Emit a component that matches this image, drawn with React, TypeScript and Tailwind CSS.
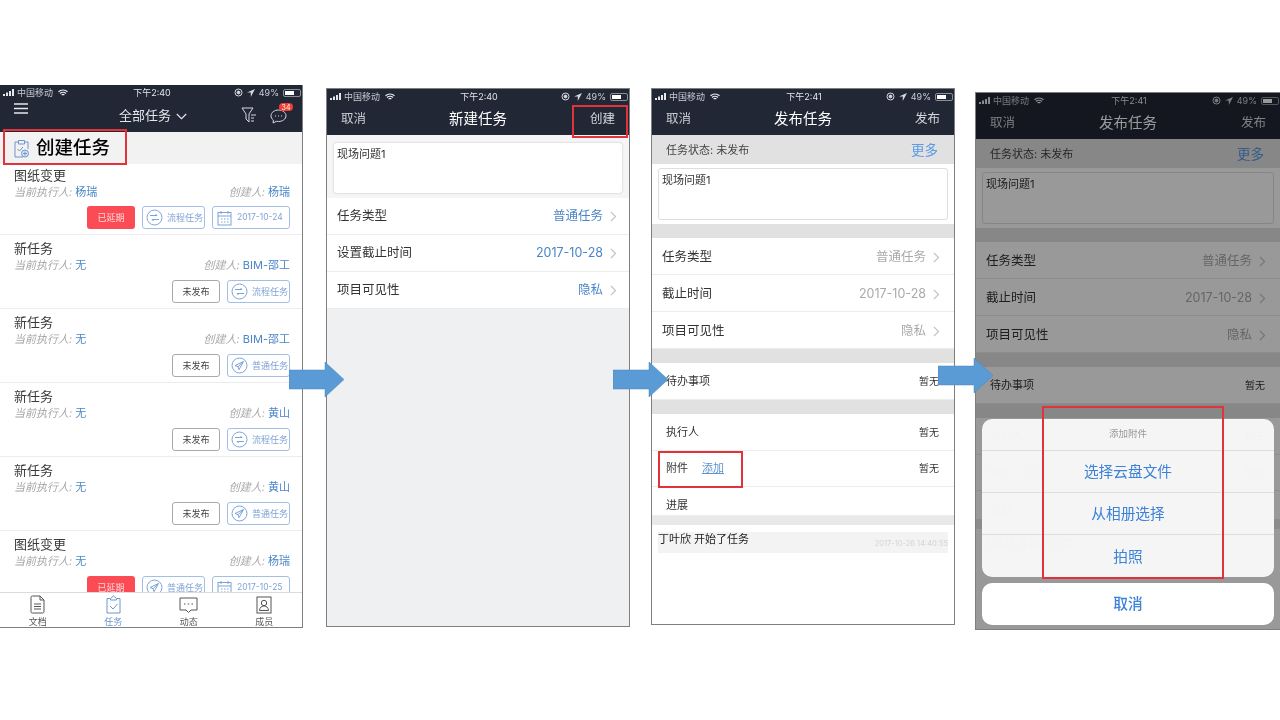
import type { ReactNode } from "react";

const BLUE = "#4a86c8";

function Chevron({ color = "#c4c4c8" }: { color?: string }) {
  return (
    <svg width="7" height="11" viewBox="0 0 7 11" fill="none" stroke={color} strokeWidth="1.2">
      <path d="M1 1l4.5 4.5L1 10" />
    </svg>
  );
}

function StatusBar({ time }: { time: string }) {
  return (
    <div className="flex h-[15px] items-center justify-between pl-[3px] pr-[1px] text-[9px] leading-none text-[#c9cbd2]">
      <div className="flex w-[100px] items-center gap-[2px]">
        <svg width="12" height="7" viewBox="0 0 12 7" fill="#e8e8ea">
          <rect x="0" y="5" width="2" height="2" />
          <rect x="3" y="3.5" width="2" height="3.5" />
          <rect x="6" y="2" width="2" height="5" />
          <rect x="9" y="0" width="2" height="7" />
        </svg>
        <span>中国移动</span>
        <svg className="ml-[3px]" width="10" height="8" viewBox="0 0 10 8" fill="none" stroke="#e8e8ea" strokeWidth="1.2">
          <path d="M.5 2.8a6.5 6.5 0 0 1 9 0M2 4.5a4.3 4.3 0 0 1 6 0M3.6 6a2 2 0 0 1 2.8 0" />
        </svg>
      </div>
      <span className="text-[#e4e5e8]">{time}</span>
      <div className="flex w-[100px] items-center justify-end gap-[4px]">
        <svg width="9" height="9" viewBox="0 0 9 9" fill="none" stroke="#d8d8dc">
          <circle cx="4.5" cy="4.5" r="3.5" />
          <circle cx="4.5" cy="4.5" r="1.4" fill="#d8d8dc" />
        </svg>
        <svg width="8" height="8" viewBox="0 0 8 8" fill="#d8d8dc">
          <path d="M8 0L0 3.6h3.8V8z" />
        </svg>
        <span>49%</span>
        <span className="flex h-[8px] w-[18px] items-stretch rounded-[2px] border border-[#8d8f98] p-[1px]">
          <span className="w-[9px] bg-white" />
        </span>
      </div>
    </div>
  );
}

function NavBar({ left, title, right }: { left: string; title: string; right: string }) {
  return (
    <div className="flex h-[31px] items-center justify-between pb-[2px] pl-[14px] pr-[14px]">
      <span className="mt-[2px] text-[12.5px] text-[#c8cad0]">{left}</span>
      <span className="text-[14.5px] text-white">{title}</span>
      <span className="mt-[2px] text-[12.5px] text-[#d6d7dc]">{right}</span>
    </div>
  );
}

function FlowIcon() {
  return (
    <svg width="17" height="17" viewBox="0 0 17 17" fill="none" stroke="#7fa3d8" strokeWidth="1">
      <circle cx="8.5" cy="8.5" r="7.5" />
      <path d="M4 6.5h7l-1.5-1.5M13 10.5H6l1.5 1.5" />
    </svg>
  );
}

function PlaneIcon() {
  return (
    <svg width="17" height="17" viewBox="0 0 17 17" fill="none" stroke="#7fa3d8" strokeWidth="1">
      <circle cx="8.5" cy="8.5" r="7.5" />
      <path d="M12.5 4.5L4 8.5l3 1.2 1 3zM7 9.7l5.5-5.2" />
    </svg>
  );
}

function CalendarIcon() {
  return (
    <svg width="15" height="16" viewBox="0 0 15 16" fill="none" stroke="#7fa3d8" strokeWidth="1">
      <rect x="1" y="2.5" width="13" height="12.5" />
      <path d="M1 6h13M4 1v3M11 1v3M4 9h1.5M7 9h1.5M10 9h1.5M4 12h1.5M7 12h1.5M10 12h1.5" />
    </svg>
  );
}

function RedTag() {
  return (
    <div className="flex h-[23px] w-[48px] items-center justify-center rounded-[3px] bg-[#fb4b54] text-[9px] text-[#ffd9dc]">
      已延期
    </div>
  );
}

function DraftTag() {
  return (
    <div className="flex h-[23px] w-[48px] items-center justify-center rounded-[3px] border border-[#a9a9a9] text-[9px] text-[#444]">
      未发布
    </div>
  );
}

function TypeTag({ kind }: { kind: "flow" | "plain" }) {
  return (
    <div className="flex h-[23px] w-[63px] items-center gap-[4px] rounded-[3px] border border-[#a4bfe6] pl-[3px] text-[9px] text-[#7fa3d8]">
      {kind === "flow" ? <FlowIcon /> : <PlaneIcon />}
      <span className="whitespace-nowrap">{kind === "flow" ? "流程任务" : "普通任务"}</span>
    </div>
  );
}

function DateTag({ date }: { date: string }) {
  return (
    <div className="flex h-[23px] w-[78px] items-center gap-[5px] rounded-[3px] border border-[#a4bfe6] pl-[4px] text-[8.5px] text-[#7fa3d8]">
      <CalendarIcon />
      <span className="whitespace-nowrap">{date}</span>
    </div>
  );
}

type Task = { title: string; owner: string; creator: string; kind: "flow" | "plain"; date?: string };

const tasks: Task[] = [
  { title: "图纸变更", owner: "杨瑞", creator: "杨瑞", kind: "flow", date: "2017-10-24" },
  { title: "新任务", owner: "无", creator: "BIM-邵工", kind: "flow" },
  { title: "新任务", owner: "无", creator: "BIM-邵工", kind: "plain" },
  { title: "新任务", owner: "无", creator: "黄山", kind: "flow" },
  { title: "新任务", owner: "无", creator: "黄山", kind: "plain" },
  { title: "图纸变更", owner: "无", creator: "杨瑞", kind: "plain", date: "2017-10-25" },
];

function TaskCard({ task, first }: { task: Task; first: boolean }) {
  return (
    <div className={first ? "h-[71px] shrink-0 border-b border-[#ececec] pl-[14px] pr-[12px] pt-[3px]" : "h-[74px] shrink-0 border-b border-[#ececec] pl-[14px] pr-[12px] pt-[5px]"}>
      <div className="h-[17px] text-[13px] leading-[17px] text-[#3a3a3a]">{task.title}</div>
      <div className="flex h-[17px] items-center justify-between text-[11px]">
        <span>
          <em className="text-[#a8a8a8]">当前执行人: </em>
          <span className="text-[#4a86c8]">{task.owner}</span>
        </span>
        <span>
          <em className="text-[#a8a8a8]">创建人: </em>
          <span className="text-[#4a86c8]">{task.creator}</span>
        </span>
      </div>
      <div className={first ? "mt-[5px] flex justify-end gap-[7px]" : "mt-[6px] flex justify-end gap-[7px]"}>
        {task.date ? <RedTag /> : <DraftTag />}
        <TypeTag kind={task.kind} />
        {task.date && <DateTag date={task.date} />}
      </div>
    </div>
  );
}

function TabItem({ label, active, icon }: { label: string; active?: boolean; icon: ReactNode }) {
  return (
    <div className={active ? "flex w-[76px] flex-col items-center text-[#6f94cf]" : "flex w-[76px] flex-col items-center text-[#555]"}>
      <div className="flex h-[23px] items-end">{icon}</div>
      <span className="mt-[3px] text-[9px] leading-[10px]">{label}</span>
    </div>
  );
}

function TaskListScreen() {
  return (
    <div className="relative mt-[85px] flex h-[543px] w-[303px] shrink-0 flex-col border border-l-0 border-t-0 border-[#7f7f7f]">
      <div className="h-[47px] bg-[#222736]">
        <StatusBar time="下午2:40" />
        <div className="relative flex h-[32px] items-center justify-center pb-[2px]">
          <svg className="absolute left-[14px] top-[3px]" width="14" height="11" viewBox="0 0 14 11" stroke="#e8e8ea" strokeWidth="1.4">
            <path d="M0 1h14M0 5.5h14M0 10h14" />
          </svg>
          <span className="ml-[4px] mt-[2px] flex items-center gap-[5px] text-[13px] text-[#e4e5e9]">
            全部任务
            <svg width="11" height="7" viewBox="0 0 11 7" fill="none" stroke="#e4e5e9" strokeWidth="1.2">
              <path d="M.8 1l4.7 4.7L10.2 1" />
            </svg>
          </span>
          <svg className="absolute left-[241px] top-[7px]" width="16" height="16" viewBox="0 0 16 16" fill="none" stroke="#d8d9de" strokeWidth="1">
            <path d="M1 1h11L8 7v8L5 12V7zM10 8h5M10 11h3M10 14h3" />
          </svg>
          <svg className="absolute left-[270px] top-[8px]" width="17" height="16" viewBox="0 0 17 16" fill="none" stroke="#d8d9de" strokeWidth="1">
            <path d="M8.5 2C4.4 2 1 4.5 1 7.8c0 1.7.9 3.2 2.4 4.3L3 15l3.4-1.7c.7.1 1.4.2 2.1.2 4.1 0 7.500-2.500 7.500-5.700S12.600 2 8.500 2z" />
            <path d="M5 8h1M8 8h1M11 8h1" />
          </svg>
          <span className="absolute left-[279px] top-[3px] flex h-[8px] w-[14px] items-center justify-center rounded-full bg-[#f23b3b] text-[7px] leading-none text-[#ffd]">
            34
          </span>
        </div>
      </div>
      <div className="flex h-[32px] items-center gap-[7px] bg-[#f2f2f2] pl-[14px] text-[18.5px] font-medium text-black">
        <svg width="15" height="19" viewBox="0 0 15 19" fill="none" stroke="#6f94cf" strokeWidth="1">
          <path d="M4 3H1v15h8M11 3h3v7M4.500 1.500h6V5h-6zM3.500 10l2 2 3.500-4" />
          <circle cx="11" cy="14.500" r="3.500" fill="#dce7f7" />
          <path d="M11 12.500v4M9 14.500h4" />
        </svg>
        <span>创建任务</span>
      </div>
      <div className="flex h-[428px] flex-col overflow-hidden">
        {tasks.map((t, i) => (
          <TaskCard key={i} task={t} first={i === 0} />
        ))}
      </div>
      <div className="flex h-[35px] flex-1 border-t border-[#dcdcdc] bg-white">
        <TabItem
          label="文档"
          icon={
            <svg width="15" height="19" viewBox="0 0 15 19" fill="none" stroke="#555" strokeWidth="1">
              <path d="M1 2.500A1.500 1.500 0 0 1 2.500 1H10l4 4v11.500a1.500 1.500 0 0 1-1.500 1.500h-10A1.500 1.500 0 0 1 1 16.500zM10 1v4h4M4 9h7M4 11.500h7M4 14h7" />
            </svg>
          }
        />
        <TabItem
          active
          label="任务"
          icon={
            <svg width="15" height="19" viewBox="0 0 15 19" fill="none" stroke="#6f94cf" strokeWidth="1">
              <path d="M4 3.500H1V18h13V3.500h-3M4.500 3.500L7.500 1l3 2.500v1.500h-6zM4 11l3 3 4.500-5" />
            </svg>
          }
        />
        <TabItem
          label="动态"
          icon={
            <svg width="19" height="17" viewBox="0 0 19 17" fill="none" stroke="#555" strokeWidth="1">
              <path d="M1 1h17v12h-6l-2.500 2.500L7 13H1zM5 7h1.500M8.700 7h1.500M12.500 7H14" />
            </svg>
          }
        />
        <TabItem
          label="成员"
          icon={
            <svg width="16" height="18" viewBox="0 0 16 18" fill="none" stroke="#555" strokeWidth="1">
              <rect x="1" y="1" width="14" height="16" />
              <circle cx="8" cy="7" r="2.700" />
              <path d="M3.500 14.500c.3-3 2-4.500 4.500-4.500s4.200 1.500 4.500 4.500z" />
            </svg>
          }
        />
      </div>
      <div className="absolute left-[3px] top-[44px] h-[36px] w-[124px] border-2 border-[#e2323a]" />
    </div>
  );
}

function FormRow({ label, value, valueColor, wide }: { label: string; value: string; valueColor: string; wide?: boolean }) {
  return (
    <div className={wide ? "flex h-[37px] items-center justify-between border-b border-[#ececec] bg-white pl-[10px] pr-[14px] pt-[2px]" : "flex h-[37px] items-center justify-between border-b border-[#ececec] bg-white pl-[10px] pr-[12px] pt-[1px]"}>
      <span className="text-[12.5px] text-[#333]">{label}</span>
      <span className="flex items-center gap-[7px] text-[12.5px]" style={{ color: valueColor }}>
        {value}
        <Chevron />
      </span>
    </div>
  );
}

function NewTaskScreen() {
  return (
    <div className="relative ml-[23px] mt-[88px] flex h-[539px] w-[304px] shrink-0 flex-col border border-[#7f7f7f] bg-[#eff0f2]">
      <div className="h-[46px] bg-[#222736]">
        <StatusBar time="下午2:40" />
        <NavBar left="取消" title="新建任务" right="创建" />
      </div>
      <div className="bg-[#f5f5f6] px-[7px] pb-[5px] pt-[8px]">
        <div className="h-[50px] rounded-[3px] bg-white px-[3px] pt-[3px] text-[11px] leading-[16px] text-[#333] shadow-[0_0_2px_#bbb]">现场问题1</div>
      </div>
      <FormRow label="任务类型" value="普通任务" valueColor={BLUE} />
      <FormRow label="设置截止时间" value="2017-10-28" valueColor={BLUE} />
      <FormRow label="项目可见性" value="隐私" valueColor={BLUE} />
      <div className="absolute left-[245px] top-[16px] h-[33px] w-[56px] border-2 border-[#e2323a]" />
    </div>
  );
}

function PlainRow({ h, children, right }: { h: string; children: ReactNode; right?: string }) {
  return (
    <div className={`flex ${h} items-center justify-between border-b border-[#ececec] bg-white pl-[14px] pr-[15px] text-[11px] text-[#333]`}>
      <div className="flex items-center">{children}</div>
      {right && <span className="text-[10px]">{right}</span>}
    </div>
  );
}

function PublishBody({ time }: { time: string }) {
  return (
    <>
      <div className="h-[46px] bg-[#222736]">
        <StatusBar time={time} />
        <NavBar left="取消" title="发布任务" right="发布" />
      </div>
      <div className="flex h-[29px] items-center justify-between bg-[#e1e1e1] pl-[14px] pr-[16px] pt-[2px]">
        <span className="text-[11px] text-[#444]">任务状态: 未发布</span>
        <span className="text-[13.5px] text-[#5b9be6]">更多</span>
      </div>
      <div className="h-[60px] bg-white px-[6px] pt-[4px]">
        <div className="h-[52px] rounded-[3px] border border-[#dedede] px-[3px] pt-[3px] text-[11px] leading-[16px] text-[#333]">现场问题1</div>
      </div>
      <div className="h-[14px] bg-[#e1e1e1]" />
      <FormRow wide label="任务类型" value="普通任务" valueColor="#aaaaaa" />
      <FormRow wide label="截止时间" value="2017-10-28" valueColor="#aaaaaa" />
      <FormRow wide label="项目可见性" value="隐私" valueColor="#aaaaaa" />
      <div className="h-[14px] bg-[#e1e1e1]" />
      <PlainRow h="h-[37px]" right="暂无">
        待办事项
      </PlainRow>
      <div className="h-[14px] bg-[#e1e1e1]" />
      <PlainRow h="h-[37px] pt-[1px]" right="暂无">
        执行人
      </PlainRow>
      <PlainRow h="h-[36px]" right="暂无">
        附件
        <span className="ml-[14px] text-[#5b93cf] underline">添加</span>
      </PlainRow>
      <PlainRow h="h-[29px] pt-[8px]">进展</PlainRow>
      <div className="h-[9px] bg-[#e9e9e9]" />
      <div className="bg-white px-[6px] pt-[7px]">
        <div className="flex h-[21px] justify-between bg-[#f3f3f3] text-[11px] leading-[14px] text-[#222]">
          <span>丁叶欣 开始了任务</span>
          <span className="mt-[5px] whitespace-nowrap text-[7.5px] text-[#d4d4d4]">2017-10-26 14:40:55</span>
        </div>
      </div>
    </>
  );
}

function PublishScreen() {
  return (
    <div className="relative ml-[21px] mt-[88px] flex h-[537px] w-[304px] shrink-0 flex-col border border-[#7f7f7f] bg-white">
      <PublishBody time="下午2:41" />
      <div className="absolute left-[6px] top-[362px] h-[37px] w-[85px] border-2 border-[#e2323a]" />
    </div>
  );
}

function SheetItem({ label, last }: { label: string; last?: boolean }) {
  return (
    <div className={last ? "flex h-[42px] items-center justify-center pt-[2px] text-[14.7px] text-[#3b82d8]" : "flex h-[42px] items-center justify-center border-b border-[#dddddd] pt-[2px] text-[14.7px] text-[#3b82d8]"}>
      {label}
    </div>
  );
}

function ActionSheetScreen() {
  return (
    <div className="relative ml-[20px] mt-[92px] flex h-[538px] w-[305px] shrink-0 flex-col overflow-hidden border border-r-0 border-[#7f7f7f] bg-white">
      <PublishBody time="下午2:41" />
      <div className="absolute inset-0 bg-black/40" />
      <div className="absolute bottom-[4px] left-[6px] right-[6px]">
        <div className="overflow-hidden rounded-[10px] bg-[#f7f7f7]/[0.98]">
          <div className="flex h-[32px] items-center justify-center border-b border-[#dddddd] text-[9.5px] text-[#999]">添加附件</div>
          <SheetItem label="选择云盘文件" />
          <SheetItem label="从相册选择" />
          <SheetItem label="拍照" last />
        </div>
        <div className="mt-[6px] flex h-[42px] items-center justify-center rounded-[10px] bg-white pt-[1px] text-[14.7px] font-medium text-[#3b82d8]">取消</div>
      </div>
      <div className="absolute left-[66px] top-[313px] h-[173px] w-[182px] border-2 border-[#e2323a]" />
    </div>
  );
}

function Arrow({ className }: { className: string }) {
  return (
    <svg className={className} width="55" height="35" viewBox="0 0 55 35" fill="#5b9bd5" stroke="#4a86bd" strokeWidth="0.5">
      <path d="M0 8h36V0l19 17.500L36 35v-8H0z" />
    </svg>
  );
}

export default function App() {
  return (
    <div className="relative h-[720px] w-[1280px] overflow-hidden bg-white blur-[0.4px] [font-family:Inter,'Noto_Sans_CJK_SC',sans-serif]">
      <div className="flex items-start">
        <TaskListScreen />
        <NewTaskScreen />
        <PublishScreen />
        <ActionSheetScreen />
      </div>
      <Arrow className="absolute left-[289px] top-[362px]" />
      <Arrow className="absolute left-[613px] top-[362px]" />
      <Arrow className="absolute left-[938px] top-[358px]" />
    </div>
  );
}
